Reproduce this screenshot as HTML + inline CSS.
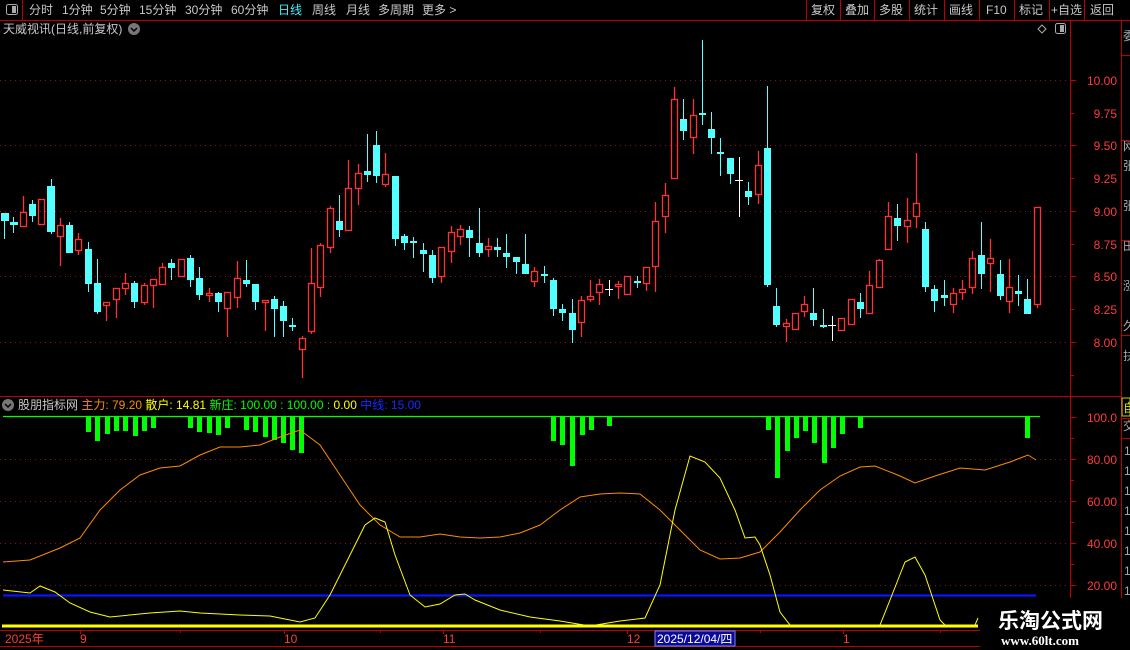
<!DOCTYPE html>
<html><head><meta charset="utf-8"><style>
body{margin:0;background:#000;width:1130px;height:650px;overflow:hidden;position:relative;font-family:"Liberation Sans","Noto Sans CJK SC",sans-serif;font-size:12px;color:#c8c8c8}
.t{position:absolute;white-space:nowrap;line-height:14px}
</style></head><body>
<svg width="1130" height="650" style="position:absolute;left:0;top:0" font-family="Liberation Sans, Noto Sans CJK SC, sans-serif">
<!-- frame lines -->
<g stroke="#c00000" stroke-width="1" fill="none">
<path d="M0 20.5H1130M1070.5 20V630M1121.5 20V630M0 396.5H1121M0 630.5H1130M0 646.5H1130M22.5 0V20"/>
<path d="M806.5 0V20M840.5 0V20M874.5 0V20M909.5 0V20M944.5 0V20M979.5 0V20M1014.5 0V20M1049.5 0V20M1084.5 0V20"/>
</g>
<!-- grid dotted -->
<g stroke="#8a1010" stroke-dasharray="1 4" stroke-width="1">
<path d="M0 80.5H1068M0 145.5H1068M0 211.5H1068M0 276.5H1068M0 342.5H1068"/>
<path d="M0 459.5H1068M0 501.5H1068M0 543.5H1068M0 585.5H1068"/>
</g>
<!-- axis ticks -->
<g stroke="#c00000"><path d="M1070 80.5h6M1070 113.5h4M1070 145.5h6M1070 178.5h4M1070 211.5h6M1070 244.5h4M1070 276.5h6M1070 309.5h4M1070 342.5h6M1070 375.5h4M1070 417.5h6M1070 438.5h4M1070 459.5h6M1070 480.5h4M1070 501.5h6M1070 522.5h4M1070 543.5h6M1070 564.5h4M1070 585.5h6M1070 606.5h4"/>
<path d="M80.5 630v4M284.5 630v4M443.5 630v4M627.5 630v4M843.5 630v4M180.5 630v3M380.5 630v3M540.5 630v3M760.5 630v3M940.5 630v3"/></g>
<g fill="#ff3c3c" font-size="12" text-anchor="end">
<text x="1117" y="85">10.00</text><text x="1117" y="118">9.75</text><text x="1117" y="150">9.50</text><text x="1117" y="183">9.25</text><text x="1117" y="216">9.00</text><text x="1117" y="249">8.75</text><text x="1117" y="281">8.50</text><text x="1117" y="314">8.25</text><text x="1117" y="347">8.00</text>
<text x="1117" y="422">100.0</text><text x="1117" y="464">80.00</text><text x="1117" y="506">60.00</text><text x="1117" y="548">40.00</text><text x="1117" y="590">20.00</text>
</g>
<!-- candles cyan -->
<g fill="#54ffff" stroke="#54ffff" stroke-width="1">
<path d="M4.5 213V239M13.5 217V233M32.5 200V222M51.5 179V234M69.5 222V253M88.5 242V292M97.5 259V314M134.5 281V308M171.5 259V280M190.5 255V287M199.5 267V300M218.5 292V312M246.5 260V287M255.5 284V310M274.5 296V337M283.5 301V337M292.5 318V331M339.5 195V237M367.5 134V182M376.5 131V183M395.5 176V246M404.5 234V250M413.5 237V258M423.5 243V272M432.5 250V283M469.5 226V257M479.5 208V257M497.5 238V257M506.5 234V268M516.5 257V274M525.5 234V274M544.5 266V283M553.5 278V316M562.5 304V321M572.5 299V343M637.5 276V288M683.5 99V140M702.5 40V125M711.5 112V154M720.5 138V176M730.5 158V184M748.5 182V205M767.5 86V287M776.5 288V327M813.5 288V326M823.5 309V328M860.5 293V318M897.5 204V241M925.5 222V292M934.5 285V312M944.5 280V306M981.5 222V289M1000.5 260V300M1018.5 275V306M1027.5 279V314"/>
<g stroke="none">
<rect x="1" y="213" width="8" height="8"/><rect x="10" y="222" width="8" height="3"/><rect x="29" y="204" width="7" height="12"/><rect x="47" y="186" width="8" height="46"/><rect x="66" y="225" width="7" height="28"/><rect x="85" y="249" width="7" height="35"/><rect x="94" y="283" width="7" height="29"/><rect x="131" y="283" width="7" height="19"/><rect x="168" y="263" width="7" height="5"/><rect x="187" y="258" width="7" height="22"/><rect x="196" y="278" width="7" height="17"/><rect x="215" y="293" width="7" height="9"/><rect x="243" y="280" width="7" height="4"/><rect x="252" y="284" width="7" height="18"/><rect x="271" y="299" width="7" height="10"/><rect x="280" y="306" width="7" height="15"/><rect x="289" y="325" width="7" height="2"/><rect x="336" y="221" width="7" height="9"/><rect x="364" y="171" width="7" height="4"/><rect x="373" y="145" width="7" height="31"/><rect x="392" y="176" width="7" height="63"/><rect x="401" y="236" width="7" height="7"/><rect x="410" y="241" width="7" height="2"/><rect x="420" y="250" width="7" height="4"/><rect x="429" y="255" width="7" height="23"/><rect x="466" y="230" width="7" height="8"/><rect x="476" y="243" width="7" height="10"/><rect x="494" y="247" width="7" height="3"/><rect x="503" y="253" width="7" height="4"/><rect x="513" y="257" width="7" height="5"/><rect x="522" y="264" width="7" height="10"/><rect x="541" y="274" width="7" height="2"/><rect x="550" y="280" width="7" height="29"/><rect x="559" y="309" width="7" height="4"/><rect x="569" y="313" width="7" height="17"/><rect x="634" y="281" width="7" height="2"/><rect x="680" y="119" width="7" height="12"/><rect x="699" y="113" width="7" height="2"/><rect x="708" y="129" width="7" height="9"/><rect x="717" y="152" width="7" height="2"/><rect x="727" y="158" width="7" height="16"/><rect x="745" y="191" width="7" height="6"/><rect x="764" y="148" width="7" height="137"/><rect x="773" y="306" width="7" height="19"/><rect x="810" y="313" width="7" height="7"/><rect x="820" y="325" width="7" height="2"/><rect x="857" y="302" width="7" height="7"/><rect x="894" y="218" width="7" height="8"/><rect x="922" y="229" width="7" height="58"/><rect x="931" y="289" width="7" height="12"/><rect x="941" y="295" width="7" height="3"/><rect x="978" y="255" width="7" height="19"/><rect x="997" y="274" width="7" height="22"/><rect x="1015" y="291" width="7" height="3"/><rect x="1024" y="299" width="7" height="15"/>
</g></g>
<!-- white crosses -->
<g stroke="#fff"><path d="M609.5 280V296M605 289.5h8M739.5 157V217M735 180.5h8M832.5 316V341M828 325.5h8"/></g>
<!-- red hollow -->
<g stroke="#ff3232" stroke-width="1.3" fill="none">
<path d="M23.5 196V212M60.5 218V225M60.5 237V266M78.5 233V239M78.5 251V255M106.5 305V321M116.5 300V318M125.5 273V283M125.5 289V295M144.5 283V285M144.5 303V305M153.5 286V308M162.5 263V267M209.5 288V293M209.5 296V302M227.5 309V337M237.5 261V278M237.5 298V308M265.5 302V331M302.5 336V338M302.5 350V378M311.5 248V283M311.5 332V334M320.5 243V245M320.5 288V297M330.5 206V208M330.5 248V253M348.5 160V188M358.5 164V173M358.5 189V205M385.5 153V174M385.5 185V187M441.5 277V283M451.5 226V232M451.5 252V263M460.5 225V229M460.5 237V245M488.5 238V246M488.5 250V257M534.5 267V271M534.5 282V287M581.5 296V300M581.5 323V337M590.5 280V296M590.5 300V302M599.5 279V284M599.5 293V305M618.5 281V284M618.5 287V299M646.5 284V291M655.5 202V221M655.5 267V292M665.5 183V195M665.5 217V233M674.5 87V99M693.5 99V115M693.5 138V154M758.5 151V165M758.5 195V204M786.5 319V323M786.5 327V342M804.5 296V304M804.5 312V317M869.5 271V285M879.5 259V260M888.5 202V216M907.5 198V220M907.5 227V243M916.5 153V203M916.5 217V228M953.5 288V293M953.5 305V313M962.5 280V289M962.5 293V300M972.5 251V258M972.5 288V294M990.5 239V258M990.5 264V292M1009.5 259V287M1009.5 302V313M1037.5 305V308"/>
<rect x="20.5" y="212.5" width="6" height="14"/><rect x="38.5" y="199.5" width="6" height="25"/><rect x="57.5" y="225.5" width="6" height="11"/><rect x="75.5" y="239.5" width="6" height="11"/><rect x="103.5" y="302.5" width="6" height="3"/><rect x="113.5" y="288.5" width="6" height="11"/><rect x="122.5" y="283.5" width="6" height="5"/><rect x="141.5" y="285.5" width="6" height="17"/><rect x="150.5" y="279.5" width="6" height="6"/><rect x="159.5" y="267.5" width="6" height="17"/><rect x="178.5" y="259.5" width="6" height="17"/><rect x="206.5" y="293.5" width="6" height="2"/><rect x="224.5" y="292.5" width="6" height="16"/><rect x="234.5" y="278.5" width="6" height="19"/><rect x="262.5" y="300.5" width="6" height="2"/><rect x="299.5" y="338.5" width="6" height="11"/><rect x="308.5" y="283.5" width="6" height="48"/><rect x="317.5" y="245.5" width="6" height="42"/><rect x="327.5" y="208.5" width="6" height="39"/><rect x="345.5" y="188.5" width="6" height="42"/><rect x="355.5" y="173.5" width="6" height="15"/><rect x="382.5" y="174.5" width="6" height="10"/><rect x="438.5" y="247.5" width="6" height="29"/><rect x="448.5" y="232.5" width="6" height="19"/><rect x="457.5" y="229.5" width="6" height="7"/><rect x="485.5" y="246.5" width="6" height="3"/><rect x="531.5" y="271.5" width="6" height="10"/><rect x="578.5" y="300.5" width="6" height="22"/><rect x="587.5" y="296.5" width="6" height="3"/><rect x="596.5" y="284.5" width="6" height="8"/><rect x="615.5" y="284.5" width="6" height="2"/><rect x="624.5" y="276.5" width="6" height="18"/><rect x="643.5" y="267.5" width="6" height="16"/><rect x="652.5" y="221.5" width="6" height="45"/><rect x="662.5" y="195.5" width="6" height="21"/><rect x="671.5" y="99.5" width="6" height="79"/><rect x="690.5" y="115.5" width="6" height="22"/><rect x="755.5" y="165.5" width="6" height="29"/><rect x="783.5" y="323.5" width="6" height="3"/><rect x="792.5" y="313.5" width="6" height="16"/><rect x="801.5" y="304.5" width="6" height="7"/><rect x="838.5" y="318.5" width="6" height="12"/><rect x="848.5" y="299.5" width="6" height="25"/><rect x="866.5" y="285.5" width="6" height="28"/><rect x="876.5" y="260.5" width="6" height="27"/><rect x="885.5" y="216.5" width="6" height="33"/><rect x="904.5" y="220.5" width="6" height="6"/><rect x="913.5" y="203.5" width="6" height="13"/><rect x="950.5" y="293.5" width="6" height="11"/><rect x="959.5" y="289.5" width="6" height="3"/><rect x="969.5" y="258.5" width="6" height="29"/><rect x="987.5" y="258.5" width="6" height="5"/><rect x="1006.5" y="287.5" width="6" height="14"/><rect x="1034.5" y="207.5" width="6" height="97"/>
</g>
<!-- indicator -->
<path d="M3 416.5H1040" stroke="#00ff00" stroke-width="1.3"/>
<g fill="#00ff00">
<rect x="86" y="416" width="5" height="16"/><rect x="95" y="416" width="5" height="25"/><rect x="105" y="416" width="5" height="18"/><rect x="114" y="416" width="5" height="15"/><rect x="123" y="416" width="5" height="15"/><rect x="133" y="416" width="5" height="20"/><rect x="142" y="416" width="5" height="15"/><rect x="151" y="416" width="5" height="12"/>
<rect x="188" y="416" width="5" height="12"/><rect x="197" y="416" width="5" height="16"/><rect x="207" y="416" width="5" height="17"/><rect x="216" y="416" width="5" height="19"/><rect x="225" y="416" width="5" height="12"/>
<rect x="244" y="416" width="5" height="14"/><rect x="253" y="416" width="5" height="16"/><rect x="263" y="416" width="5" height="21"/><rect x="272" y="416" width="5" height="24"/><rect x="281" y="416" width="5" height="27"/><rect x="290" y="416" width="5" height="34"/><rect x="299" y="416" width="5" height="37"/>
<rect x="551" y="416" width="5" height="25"/><rect x="560" y="416" width="5" height="29"/><rect x="570" y="416" width="5" height="50"/><rect x="580" y="416" width="5" height="19"/><rect x="589" y="416" width="5" height="14"/><rect x="607" y="416" width="5" height="10"/>
<rect x="766" y="416" width="5" height="14"/><rect x="775" y="416" width="5" height="62"/><rect x="785" y="416" width="5" height="35"/><rect x="794" y="416" width="5" height="22"/><rect x="803" y="416" width="5" height="15"/><rect x="812" y="416" width="5" height="27"/><rect x="822" y="416" width="5" height="47"/><rect x="831" y="416" width="5" height="32"/><rect x="840" y="416" width="5" height="18"/><rect x="858" y="416" width="5" height="12"/><rect x="1025" y="416" width="5" height="22"/>
</g>
<path d="M3 595.5H1036" stroke="#0a14ff" stroke-width="2.2"/>
<polyline fill="none" stroke="#ff8c00" stroke-width="1" points="3,562 30,560 60,548 80,538 100,510 120,490 140,475 160,468 180,466 200,455 220,447 240,447 260,445 280,437 300,430 320,445 340,475 360,505 380,525 400,537 420,537 440,534 460,537 480,538 500,537 520,533 540,525 560,510 580,497 600,494 620,493 640,494 660,510 680,530 700,550 720,559 740,558 760,552 780,532 800,510 820,490 840,476 860,467 875,466 900,476 915,483 935,476 960,468 985,470 1010,462 1028,455 1036,460"/>
<polyline fill="none" stroke="#ffff00" stroke-width="1" points="3,590 30,593 40,586 55,592 70,603 90,612 110,617 150,613 180,611 200,613 240,615 270,616 300,622 315,618 330,595 350,555 365,525 375,518 385,522 395,555 410,595 425,607 440,604 455,595 465,594 475,600 500,610 530,617 560,621 590,626 620,621 645,618 660,585 675,510 690,456 705,462 720,478 735,510 745,538 755,537 760,545 770,575 780,612 790,625 880,625 890,600 905,562 915,557 925,575 940,620 945,625 975,625 978,618"/>
<path d="M2 626H978" stroke="#ffff00" stroke-width="3"/>
<!-- icons -->
<rect x="6.5" y="4.5" width="11" height="10" rx="2" fill="none" stroke="#aaa"/><rect x="12" y="6" width="4" height="7" fill="#aaa"/>
<rect x="1055.5" y="23.5" width="10" height="10" rx="2" fill="none" stroke="#aaa"/><rect x="1060" y="25" width="4" height="7" fill="#aaa"/>
<path d="M1042 25l4 4-4 4-4-4z" fill="none" stroke="#aaa"/>
<circle cx="134" cy="29" r="6" fill="#777"/><path d="M131 28l3 3 3-3" stroke="#000" stroke-width="1.5" fill="none"/>
<circle cx="8" cy="405" r="6" fill="#777"/><path d="M5 404l3 3 3-3" stroke="#000" stroke-width="1.5" fill="none"/>
<!-- right tabs -->
<rect x="1122" y="398" width="8" height="18" fill="none" stroke="#cc0" /><text x="1123" y="412" fill="#dd0" font-size="12">自</text>
<g fill="#aaa" font-size="12"><text x="1123" y="40">委</text><text x="1123" y="150">网</text><text x="1123" y="170">张</text><text x="1123" y="210">张</text><text x="1123" y="250">田</text><text x="1123" y="290">涨</text><text x="1123" y="330">久</text><text x="1123" y="360">扶</text><text x="1123" y="430">交</text>
<text x="1124" y="455">1</text><text x="1124" y="475">1</text><text x="1124" y="495">1</text><text x="1124" y="515">1</text><text x="1124" y="535">1</text><text x="1124" y="555">1</text><text x="1124" y="575">1</text><text x="1124" y="595">1</text></g>
<g stroke="#c00000"><path d="M1121 55.5h9M1121 140.5h9M1121 240.5h9M1121 335.5h9M1121 418.5h9M1121 438.5h9"/></g>
<!-- date bar -->
<rect x="655" y="631" width="80" height="15" fill="#0a0a9a" stroke="#8080ff"/>
<g fill="#ff3c3c" font-size="12"><text x="5" y="643">2025年</text><text x="80" y="643">9</text><text x="284" y="643">10</text><text x="443" y="643">11</text><text x="627" y="643">12</text><text x="843" y="643">1</text></g>
<text x="657" y="643" fill="#fff" font-size="12">2025/12/04/四</text>
<!-- watermark -->
<rect x="980" y="598" width="150" height="52" fill="#000"/>
<text x="998" y="628" fill="#fff" font-size="21" font-weight="bold" font-family="Noto Sans CJK SC, sans-serif">乐淘公式网</text>
<text x="1001" y="645" fill="#fff" font-size="13" font-weight="bold" font-family="Liberation Serif, serif">www.60lt.com</text>
</svg>
<div class="t" style="left:29px;top:3px">分时</div>
<div class="t" style="left:62px;top:3px">1分钟</div>
<div class="t" style="left:100px;top:3px">5分钟</div>
<div class="t" style="left:139px;top:3px">15分钟</div>
<div class="t" style="left:185px;top:3px">30分钟</div>
<div class="t" style="left:231px;top:3px">60分钟</div>
<div class="t" style="left:278px;top:3px;color:#3cf0ff">日线</div>
<div class="t" style="left:312px;top:3px">周线</div>
<div class="t" style="left:346px;top:3px">月线</div>
<div class="t" style="left:378px;top:3px">多周期</div>
<div class="t" style="left:422px;top:3px">更多 &gt;</div>
<div class="t" style="left:811px;top:3px">复权</div>
<div class="t" style="left:845px;top:3px">叠加</div>
<div class="t" style="left:879px;top:3px">多股</div>
<div class="t" style="left:914px;top:3px">统计</div>
<div class="t" style="left:949px;top:3px">画线</div>
<div class="t" style="left:986px;top:3px">F10</div>
<div class="t" style="left:1019px;top:3px">标记</div>
<div class="t" style="left:1051px;top:3px">+自选</div>
<div class="t" style="left:1090px;top:3px">返回</div>
<div class="t" style="left:3px;top:22px">天威视讯(日线,前复权)</div>
<div class="t" style="left:18px;top:398px">股朋指标网 <span style="color:#ff8c00">主力: 79.20</span> <span style="color:#ffff00">散户: 14.81</span> <span style="color:#00ff00">新庄: 100.00 : 100.00 :</span> <span style="color:#ffff00">0.00</span> <span style="color:#1a28ff">中线: 15.00</span></div>
</body></html>
